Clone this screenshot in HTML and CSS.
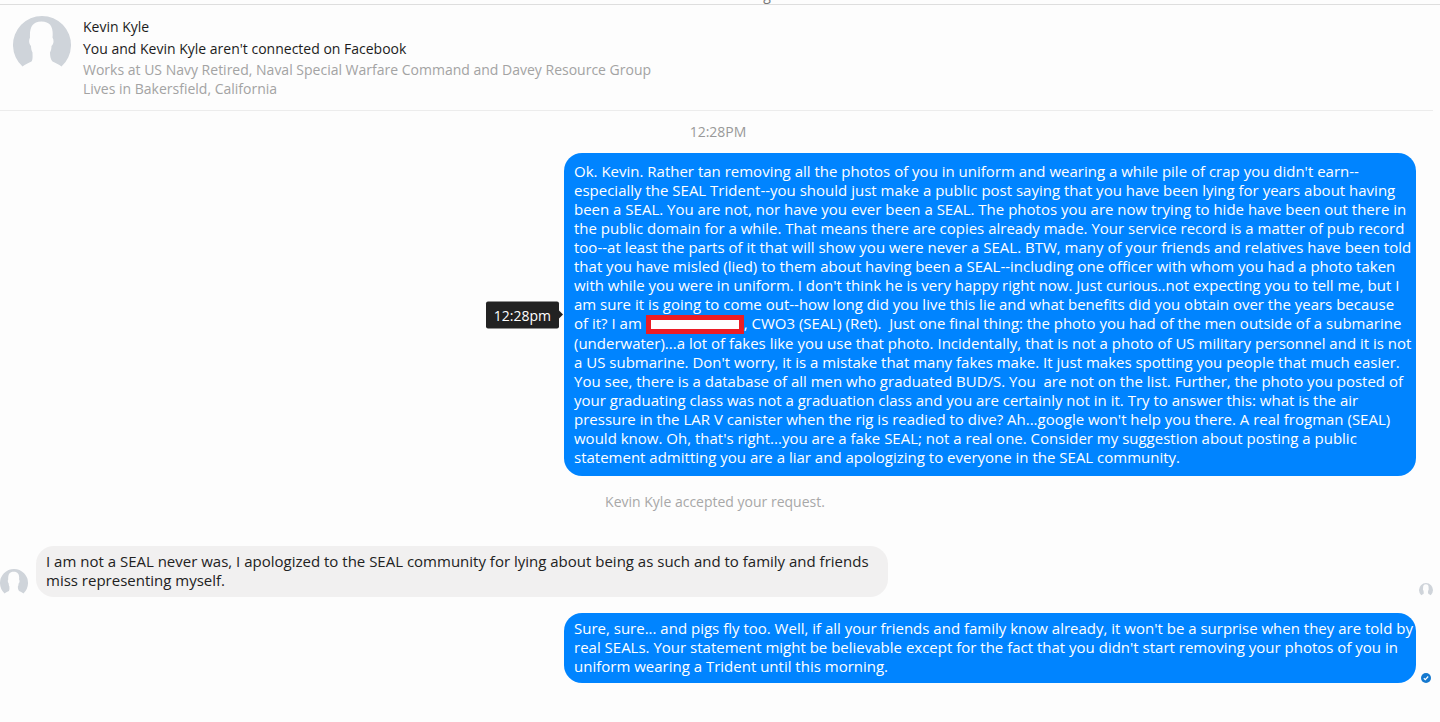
FILE: index.html
```
<!DOCTYPE html>
<html lang="en">
<head>
    <meta charset="UTF-8">
    <meta name="viewport" content="width=device-width, initial-scale=1.0">
    <title>Kevin Kyle</title>
    <link rel="stylesheet" href="styles.css">
</head>
<body>

<!-- Silhouette shared by all the avatars -->
<svg class="sprite" aria-hidden="true">
    <symbol id="person" viewBox="0 0 58 58">
        <path fill="#cfd4da" d="M9.500 50.500A29 29 0 1 1 48.500 50.500C46 48 42 47 39.500 45.500C37.500 43.500 37 40 37 36.500C38 34.500 38.500 32.500 38.500 30C41 28 41 24 39.500 21.500C40.500 12 38 5.500 28.500 5.500C19 5.500 16.500 12 17 21.500C15.500 24 16 28 18 30C18 32.500 18.500 34.500 19.500 36.500C19.500 40 20 43.500 18.500 45.500C16 47 12 48 9.500 50.500Z"/>
    </symbol>
</svg>

<div class="topbar"><span class="topbar-title">g</span></div>

<header class="profile">
    <svg class="avatar-large"><use href="#person"/></svg>
    <div class="profile-info">
        <h1 class="name">Kevin Kyle</h1>
        <p class="connection">You and Kevin Kyle aren't connected on Facebook</p>
        <p class="detail">Works at US Navy Retired, Naval Special Warfare Command and Davey Resource Group</p>
        <p class="detail">Lives in Bakersfield, California</p>
    </div>
</header>

<main class="thread">
    <p class="time">12:28PM</p>

    <div class="row sent">
        <div class="bubble long">
            <span class="tooltip">12:28pm</span>
            Ok. Kevin. Rather tan removing all the photos of you in uniform and wearing a while pile of crap you didn't earn--<br>
            especially the SEAL Trident--you should just make a public post saying that you have been lying for years about having<br>
            been a SEAL. You are not, nor have you ever been a SEAL. The photos you are now trying to hide have been out there in<br>
            the public domain for a while. That means there are copies already made. Your service record is a matter of pub record<br>
            too--at least the parts of it that will show you were never a SEAL. BTW, many of your friends and relatives have been told<br>
            that you have misled (lied) to them about having been a SEAL--including one officer with whom you had a photo taken<br>
            with while you were in uniform. I don't think he is very happy right now. Just curious..not expecting you to tell me, but I<br>
            am sure it is going to come out--how long did you live this lie and what benefits did you obtain over the years because<br>
            of it? I am <span class="redacted"></span>, CWO3 (SEAL) (Ret).&nbsp; Just one final thing: the photo you had of the men outside of a submarine<br>
            (underwater)...a lot of fakes like you use that photo. Incidentally, that is not a photo of US military personnel and it is not<br>
            a US submarine. Don't worry, it is a mistake that many fakes make. It just makes spotting you people that much easier.<br>
            You see, there is a database of all men who graduated BUD/S. You&nbsp; are not on the list. Further, the photo you posted of<br>
            your graduating class was not a graduation class and you are certainly not in it. Try to answer this: what is the air<br>
            pressure in the LAR V canister when the rig is readied to dive? Ah...google won't help you there. A real frogman (SEAL)<br>
            would know. Oh, that's right...you are a fake SEAL; not a real one. Consider my suggestion about posting a public<br>
            statement admitting you are a liar and apologizing to everyone in the SEAL community.
        </div>
        <div class="status"></div>
    </div>

    <p class="notice">Kevin Kyle accepted your request.</p>

    <div class="row received">
        <svg class="avatar-small"><use href="#person"/></svg>
        <div class="bubble">
            I am not a SEAL never was, I apologized to the SEAL community for lying about being as such and to family and friends<br>
            miss representing myself.
        </div>
        <div class="status"><svg class="seen"><use href="#person"/></svg></div>
    </div>

    <div class="row sent">
        <div class="bubble">
            Sure, sure... and pigs fly too. Well, if all your friends and family know already, it won't be a surprise when they are told by<br>
            real SEALs. Your statement might be believable except for the fact that you didn't start removing your photos of you in<br>
            uniform wearing a Trident until this morning.
        </div>
        <div class="status">
            <svg class="delivered" viewBox="0 0 10 10">
                <circle cx="5" cy="5" r="5" fill="#1579cf"/>
                <path d="M2.800 5.200L4.300 6.600L7.200 3.500" fill="none" stroke="#fff" stroke-width="1.200"/>
            </svg>
        </div>
    </div>
</main>

</body>
</html>
```
FILE: styles.css
```
* {
    box-sizing: border-box;
}
body {
    margin: 0;
    background-color: #fdfdfd;
    color: #222;
    font-family: "Open Sans", "Noto Sans", sans-serif;
    font-size: 14px;
    line-height: 19px;
}
h1, p {
    margin: 0;
    font-size: 14px;
    font-weight: 400;
}
.sprite {
    display: none;
}
.topbar {
    display: flex;
    justify-content: center;
    align-items: flex-end;
    height: 5px;
    padding-left: 94px;
    overflow: hidden;
    border-bottom: 1px solid #dedede;
}
.topbar-title {
    color: #777;
}

/* Profile summary */
.profile {
    display: flex;
    gap: 12px;
    margin-right: 7px;
    padding: 11px 13px 12px;
    border-bottom: 1px solid #ececec;
}
.avatar-large {
    flex: none;
    width: 58px;
    height: 58px;
}
.name, .connection {
    color: #1c1c1c;
    line-height: 22px;
}
.detail {
    color: #a3a3a3;
}

/* Conversation */
.time {
    padding: 11px 4px 12px 0;
    color: #999;
    text-align: center;
}
.notice {
    padding: 0 10px 35px 0;
    color: #a8a8a8;
    text-align: center;
}
.row {
    display: flex;
    align-items: flex-end;
    margin-bottom: 16px;
}
.bubble {
    position: relative;
    width: 852px;
    max-width: 90%;
    padding: 6px 10px 7px;
    border-radius: 18px;
    font-size: 15px;
}
.long {
    padding: 9px 10px;
}
.sent .bubble {
    margin-left: auto;
    background-color: #0084ff;
    color: #fff;
}
.received .bubble {
    margin-right: auto;
    background-color: #f1f0f0;
}
@media (min-width: 960px) {
    .bubble {
        white-space: nowrap;
    }
}
.status {
    display: flex;
    flex: none;
    justify-content: center;
    width: 24px;
    padding-right: 4px;
}
.avatar-small {
    flex: none;
    width: 28px;
    height: 28px;
    margin-right: 8px;
}
.seen {
    width: 14px;
    height: 14px;
}
.delivered {
    width: 10px;
    height: 10px;
}
.redacted {
    display: inline-block;
    width: 98px;
    height: 19px;
    border: 5px solid #ec1c24;
    background-color: #fff;
    vertical-align: middle;
}
.tooltip {
    position: absolute;
    top: 50%;
    right: 100%;
    margin-right: 5px;
    padding: 4px 8px;
    border-radius: 2px;
    background-color: #222;
    color: #fff;
    font-size: 14px;
    transform: translateY(-50%);
}
.tooltip::after {
    content: "";
    position: absolute;
    top: 50%;
    left: 100%;
    margin-top: -4px;
    border: 4px solid transparent;
    border-left-color: #222;
}
```
